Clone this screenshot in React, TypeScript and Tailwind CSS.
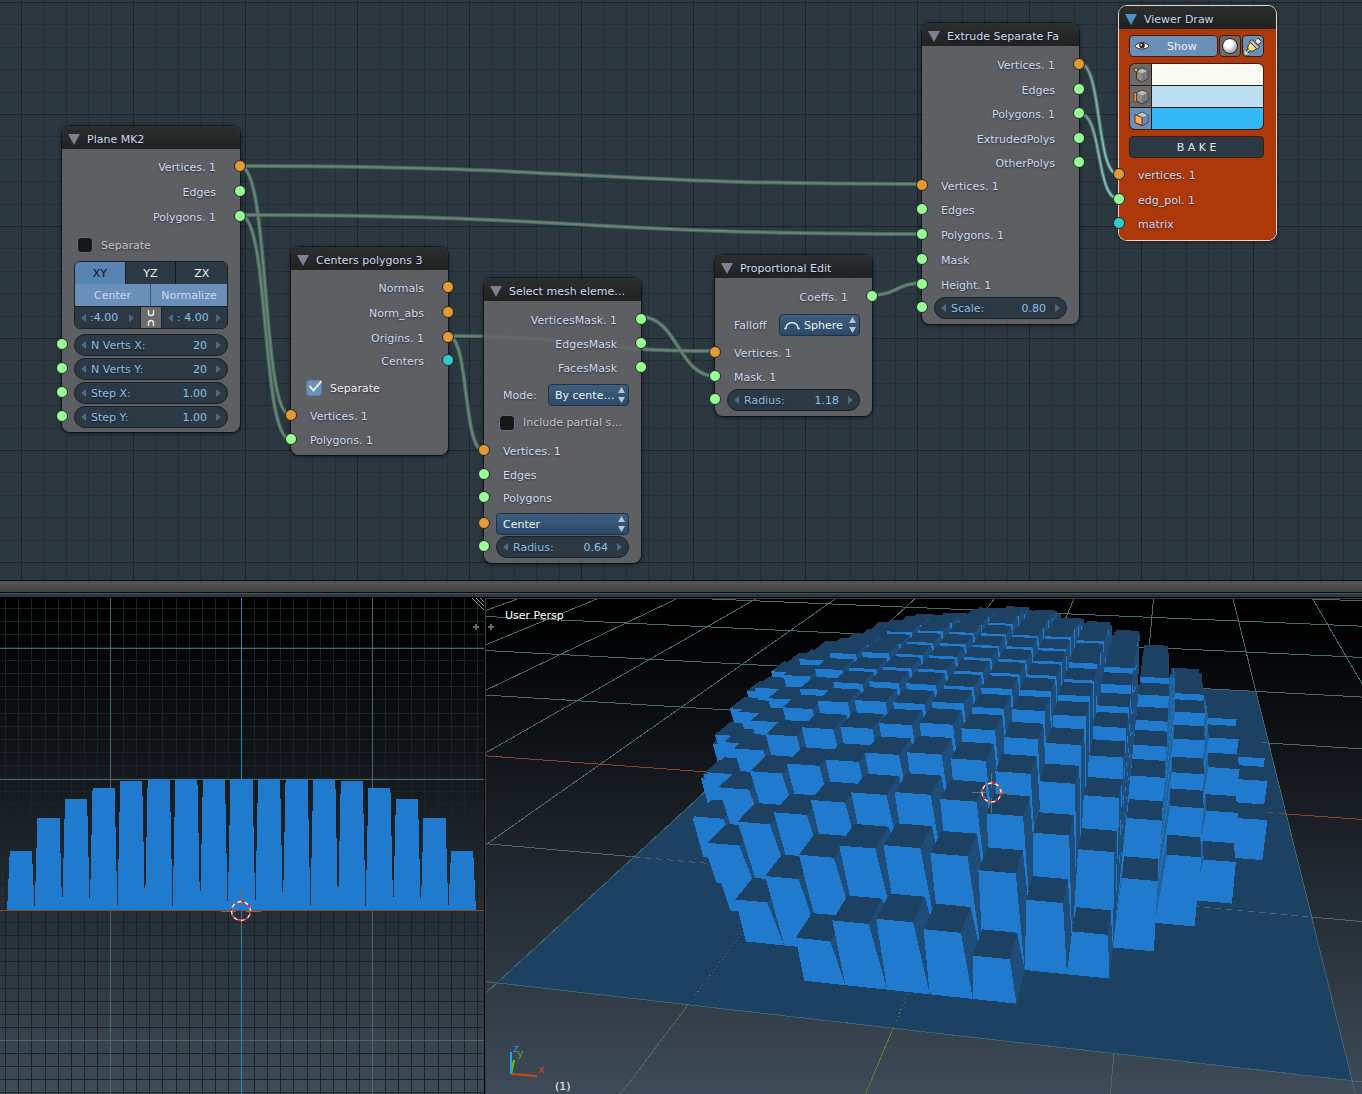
import React from "react";

type Vec = [number, number, number];

/* ---------- camera ---------- */
const P = [0.34443, 0.12091, -0.05625, 0.23077, 0.02584, -0.19383, -0.29998, -0.0184, -0.02372, 0.17641, -0.13595];
const CAM_X = 1.014;
const CELL = 4 / 19;

const wOf = ([x, y, z]: Vec) => P[8] * x + P[9] * y + P[10] * z + 1;
function project(p: Vec): [number, number] {
  const [x, y, z] = p;
  const w = wOf(p);
  return [
    415 + (400 * (P[0] * x + P[1] * y + P[2] * z + P[3])) / w,
    202 + (400 * (P[4] * x + P[5] * y + P[6] * z + P[7])) / w,
  ];
}

/* ---------- scene data ---------- */
const CORE: [number, number][] = [];
for (let i = -3; i <= 3; i++) for (let j = -3; j <= 3; j++) if (Math.hypot(i, j) * CELL <= 0.64) CORE.push([i, j]);

function blockHeight(i: number, j: number) {
  const d = (Math.min(...CORE.map(([a, b]) => Math.hypot(i - a, j - b))) * CELL) / 1.18;
  return d < 1 ? Math.sqrt(1 - d * d) : 0;
}

const pts = (a: [number, number][]) => a.map(([x, y]) => `${x.toFixed(1)},${y.toFixed(1)}`).join(" ");
const area = (a: [number, number][]) =>
  a.reduce((s, [x, y], k) => {
    const [u, v] = a[(k + 1) % a.length];
    return s + x * v - u * y;
  }, 0);

const CORNERS = [[-1, -1], [1, -1], [1, 1], [-1, 1]] as const;

function buildBlocks() {
  const out: { p: string; c: string }[] = [];
  for (let j = 9; j >= -9; j--) {
    const cols = Array.from({ length: 19 }, (_, k) => k - 9).sort((a, b) => Math.abs(b * CELL - CAM_X) - Math.abs(a * CELL - CAM_X));
    for (const i of cols) {
      const h = blockHeight(i, j);
      if (h === 0) continue;
      const cx = i * CELL, cy = j * CELL, b = CELL / 2, t = b * 0.8;
      const B = CORNERS.map(([x, y]) => project([cx + x * b, cy + y * b, 0]));
      const T = CORNERS.map(([x, y]) => project([cx + x * t, cy + y * t, h]));
      const faces: [[number, number][], string][] = [
        [[B[3], B[0], T[0], T[3]], "#1f639f"],
        [[B[1], B[2], T[2], T[1]], "#1d4d78"],
        [[B[0], B[1], T[1], T[0]], "#207bcf"],
        [T, "#1d4163"],
      ];
      faces.forEach(([f, c]) => {
        if (area(f) < 0) out.push({ p: pts(f), c });
      });
    }
  }
  return out;
}
const BLOCKS = buildBlocks();

function segment(a: Vec, b: Vec) {
  const near = 0.12, wa = wOf(a), wb = wOf(b);
  const mix = (t: number): Vec => [a[0] + (b[0] - a[0]) * t, a[1] + (b[1] - a[1]) * t, 0];
  const t = (near - wa) / (wb - wa);
  const p = project(wa < near ? mix(t) : a), q = project(wb < near ? mix(t) : b);
  return { x1: p[0], y1: p[1], x2: q[0], y2: q[1] };
}
const RANGE = Array.from({ length: 17 }, (_, k) => k - 8);

/* ---------- node parts ---------- */
const ORANGE = "bg-[#e59a33]", GREEN = "bg-[#97ff93]", TEAL = "bg-[#31cbc9]";

function Socket({ color, side }: { color: string; side: "l" | "r" }) {
  return <span className={`absolute top-1/2 z-10 size-3 -translate-y-[7px] rounded-full border border-[#20262a] ${color} ${side === "l" ? "-left-1.5" : "-right-1.5"}`} />;
}
function Out({ color, label, h = "h-[25px]" }: { color: string; label: string; h?: string }) {
  return <div className={`relative flex items-center justify-end pr-6 ${h}`}><span className="pt-0.5">{label}</span><Socket color={color} side="r" /></div>;
}
function In({ color, label, children, h = "h-6" }: { color: string; label?: string; children?: React.ReactNode; h?: string }) {
  return (
    <div className={`relative flex items-center ${children ? "px-3" : "pl-[19px]"} ${h}`}>
      <Socket color={color} side="l" />
      {label && <span className="pt-0.5">{label}</span>}
      {children}
    </div>
  );
}
function Tri({ dir }: { dir: "l" | "r" }) {
  return <svg viewBox="0 0 5 8" className="h-2 w-[5px]" fill="#536a7b"><path d={dir === "l" ? "M5 0V8L0 4Z" : "M0 0V8L5 4Z"} /></svg>;
}
function Num({ label, value, tight }: { label: string; value: string; tight?: boolean }) {
  return (
    <div className={`flex h-[22px] min-w-0 items-center border-[#1b2024] bg-[#2b3944] px-1.5 text-[#8ec0e8] ${tight ? "flex-1 border-t" : "w-full rounded-full border"}`}>
      <button aria-label="Decrease"><Tri dir="l" /></button>
      <label className={`flex min-w-0 flex-1 items-center pt-px ${tight ? "pl-1" : "px-[5px]"}`}>
        <span className="whitespace-pre">{label}</span>
        <input className={`w-full min-w-0 flex-1 bg-transparent outline-none ${tight ? "text-left" : "pr-1 text-right"}`} defaultValue={value} />
      </label>
      <button aria-label="Increase"><Tri dir="r" /></button>
    </div>
  );
}
function Pick({ value, label, w, icon }: { value: string; label: string; w: string; icon?: boolean }) {
  return (
    <span className={`relative flex h-[22px] items-center rounded-[4px] border border-[#22303c] bg-gradient-to-b from-[#3f5f80] to-[#2b4a6b] ${w}`}>
      {icon && <svg viewBox="0 0 16 10" className="ml-1 h-2.5 w-4 shrink-0" fill="none" stroke="#e8ecef" strokeWidth="1.6"><path d="M.5 9L2 8C2.500 1 13.500 1 14 8L15.500 9" /></svg>}
      <select aria-label={label} className={`h-full w-full appearance-none bg-transparent pt-px text-[#eef3f8] outline-none ${icon ? "pl-1" : "pl-1.5"}`}><option>{value}</option></select>
      <svg viewBox="0 0 7 16" className="pointer-events-none absolute right-[3px] top-0.5 h-4 w-[7px]" fill="#b9c4ce"><path d="M3.500 0L7 6H0ZM3.500 16L7 10H0Z" /></svg>
    </span>
  );
}
function Check({ label, checked, h }: { label: string; checked?: boolean; h: string }) {
  return (
    <label className={`flex items-center gap-2 pl-[15px] ${h} ${checked ? "text-[#f0f2f4]" : "text-[#c3c7c9]"}`}>
      <span className="relative flex size-4">
        <input type="checkbox" defaultChecked={checked} className="size-4 appearance-none rounded-[4px] border border-[#5b7187] bg-[#171717] checked:border-[#5d83ab] checked:bg-[#6a90b8]" />
        {checked && <svg viewBox="0 0 16 16" className="pointer-events-none absolute inset-0" fill="none" stroke="#e3e8ec" strokeWidth="2"><path d="M3.500 6L7.500 10.500L15.500 1" /></svg>}
      </span>
      <span className="pt-px">{label}</span>
    </label>
  );
}
function Node({ title, place, active, children }: { title: string; place: string; active?: boolean; children: React.ReactNode }) {
  return (
    <section className={`absolute rounded-lg shadow-[0_1px_5px_rgba(0,0,0,0.7)] ${place} ${active ? "bg-[#b23a08]/97 ring-1 ring-[#e8d9cf]" : "bg-[#646467]/90 ring-1 ring-black/40"}`}>
      <h2 className="flex h-[23px] items-center gap-[7px] whitespace-nowrap rounded-t-lg bg-gradient-to-b from-[#2b2e2f] to-[#202222] pl-1.5 pt-1">
        <svg viewBox="0 0 12 11" className="h-[11px] w-3" fill={active ? "#4f8fc8" : "#7b8190"}><path d="M0 0H12L6 11Z" /></svg>
        <span className="pt-px">{title}</span>
      </h2>
      {children}
    </section>
  );
}
function Cube({ mode }: { mode: "v" | "e" | "f" }) {
  return (
    <svg viewBox="0 0 18 18" className="size-[18px]">
      <path d="M10 2L16 5V12.500L10 16L4.500 13V5Z" fill={mode === "f" ? "#8fa3bd" : "#8d8d8d"} stroke="#333" strokeWidth="1" />
      <path d="M10 2.500L15.500 5L10 7.500L5 5Z" fill={mode === "f" ? "#b4c6dc" : "#b9b9b9"} />
      <path d="M10 7.500L15.500 5V12.300L10 15.500Z" fill={mode === "f" ? "#7389a6" : "#7a7a7a"} />
      {mode === "v" && <circle cx="4" cy="4" r="2" fill="#ffa54a" stroke="#5a2c08" />}
      {mode === "e" && <rect x="2" y="4.500" width="2.200" height="9.500" fill="#ffa54a" stroke="#5a2c08" strokeWidth=".8" />}
      {mode === "f" && <path d="M3 4.500L10 7.500V15.500L3 12.500Z" fill="#ffb060" stroke="#5a2c08" />}
    </svg>
  );
}

const LINKS: [number, number, number, number, number][] = [
  [240, 166, 922, 184, 0.5], [240, 215, 922, 234, 0.5], [240, 166, 291, 416, 0.6], [240, 215, 291, 440, 0.6],
  [448, 336, 715, 351, 0.5], [448, 336, 484, 451, 0.6], [641, 317, 715, 376, 0.5], [872, 295, 922, 283, 0.5],
];
const HOT: [number, number, number, number][] = [[1079, 63, 1119, 175], [1079, 113, 1119, 199]];
const curve = (x1: number, y1: number, x2: number, y2: number, k: number) => `M${x1} ${y1}C${x1 + (x2 - x1) * k} ${y1} ${x2 - (x2 - x1) * k} ${y2} ${x2} ${y2}`;

function NodeEditor() {
  return (
    <main className="relative h-[580px] overflow-hidden bg-[#2c3840] text-[#cbdcf3] [text-shadow:0_1px_2px_rgba(0,0,0,0.55)]">
      <svg className="absolute inset-0 size-full">
        <defs>
          <pattern id="grid" x="21" y="2" width="112" height="112" patternUnits="userSpaceOnUse">
            <path d="M22.500 0V112M45.500 0V112M67.500 0V112M90.500 0V112M0 22.500H112M0 45.500H112M0 67.500H112M0 90.500H112" stroke="#242e36" />
            <path d="M.5 0V112M0 .5H112" stroke="#1a232a" />
          </pattern>
          <linearGradient id="hot"><stop offset="0" stopColor="#77857f" /><stop offset="1" stopColor="#8ad0e0" /></linearGradient>
        </defs>
        <rect width="100%" height="100%" fill="url(#grid)" />
        <g fill="none">
          {LINKS.map((l, k) => <path key={k} d={curve(...l)} stroke="#3d6e59" strokeWidth="4" />)}
          {LINKS.map((l, k) => <path key={k} d={curve(...l)} stroke="#737d78" strokeWidth="2" />)}
          {HOT.map((l, k) => <path key={k} d={curve(...l, 0.6)} stroke="#3d6e59" strokeWidth="4" />)}
          {HOT.map((l, k) => <path key={k} d={curve(...l, 0.6)} stroke="url(#hot)" strokeWidth="2" />)}
        </g>
      </svg>

      <Node title="Plane MK2" place="left-[62px] top-[126px] w-[178px] pb-[3px]">
        <div className="pt-[5px]">
          <Out color={ORANGE} label="Vertices. 1" /><Out color={GREEN} label="Edges" /><Out color={GREEN} label="Polygons. 1" />
        </div>
        <Check label="Separate" h="h-8" />
        <div className="mx-3 overflow-hidden rounded-md border border-[#1b2024] text-center">
          <div className="grid h-[22px] grid-cols-3 divide-x divide-[#15191c] bg-[#2b3944] text-[#f0f3f5]">
            <button aria-pressed="true" className="bg-[#5685b4] pt-px text-[#0b0d10]">XY</button><button className="pt-px">YZ</button><button className="pt-px">ZX</button>
          </div>
          <div className="grid h-[22px] grid-cols-2 divide-x divide-[#3d566f] bg-[#6a8fb8] text-[#c9daf5]">
            <button className="pt-px">Center</button><button className="pt-px">Normalize</button>
          </div>
          <div className="flex">
            <Num label=":" value="4.00" tight />
            <button aria-label="Link sizes" className="flex w-[22px] items-center justify-center border-x border-t border-[#1b2024] bg-[#6b6b6b]">
              <svg viewBox="0 0 10 20" className="h-5 w-2.5" fill="none" stroke="#e9e9e9" strokeWidth="1.5"><path d="M2.500 2V5Q2.500 7.500 5 7.500T7.500 5V2M2.500 18V15Q2.500 12.500 5 12.500T7.500 15V18" /></svg>
            </button>
            <Num label=": " value="4.00" tight />
          </div>
        </div>
        <div className="pt-1">
          <In color={GREEN}><Num label="N Verts X:" value="20" /></In>
          <In color={GREEN}><Num label="N Verts Y:" value="20" /></In>
          <In color={GREEN}><Num label="Step X:" value="1.00" /></In>
          <In color={GREEN}><Num label="Step Y:" value="1.00" /></In>
        </div>
      </Node>

      <Node title="Centers polygons 3" place="left-[291px] top-[247px] w-[157px] pb-[3px]">
        <div className="pt-[5px]">
          <Out color={ORANGE} label="Normals" /><Out color={ORANGE} label="Norm_abs" /><Out color={ORANGE} label="Origins. 1" /><Out color={TEAL} label="Centers" h="h-[22px]" />
        </div>
        <Check label="Separate" checked h="h-8" />
        <In color={ORANGE} label="Vertices. 1" /><In color={GREEN} label="Polygons. 1" />
      </Node>

      <Node title="Select mesh eleme…" place="left-[484px] top-[278px] w-[157px] pb-1">
        <div className="pt-[7px]">
          <Out color={GREEN} label="VerticesMask. 1" h="h-6" /><Out color={GREEN} label="EdgesMask" h="h-6" /><Out color={GREEN} label="FacesMask" h="h-6" />
        </div>
        <div className="flex h-[30px] items-center justify-between pl-[19px] pr-3"><span className="pt-px">Mode:</span><Pick label="Mode" value="By cente…" w="w-[81px]" /></div>
        <Check label="Include partial s…" h="h-[25px]" />
        <In color={ORANGE} label="Vertices. 1" h="h-8" /><In color={GREEN} label="Edges" h="h-4" /><In color={GREEN} label="Polygons" h="h-[30px]" />
        <In color={ORANGE} h="h-[22px]"><Pick label="Element" value="Center" w="w-full" /></In>
        <In color={GREEN}><Num label="Radius:" value="0.64" /></In>
      </Node>

      <Node title="Proportional Edit" place="left-[715px] top-[255px] w-[157px] pb-[5px]">
        <div className="pt-[7px]"><Out color={GREEN} label="Coeffs. 1" h="h-6" /></div>
        <div className="flex h-8 items-center justify-between pl-[19px] pr-3"><span className="pt-px">Falloff</span><Pick label="Falloff" value="Sphere" w="w-[81px]" icon /></div>
        <In color={ORANGE} label="Vertices. 1" /><In color={GREEN} label="Mask. 1" />
        <In color={GREEN} h="h-[22px]"><Num label="Radius:" value="1.18" /></In>
      </Node>

      <Node title="Extrude Separate Fa" place="left-[922px] top-[23px] w-[157px] pb-[5px]">
        <div className="pt-1.5">
          <Out color={ORANGE} label="Vertices. 1" /><Out color={GREEN} label="Edges" /><Out color={GREEN} label="Polygons. 1" h="h-6" /><Out color={GREEN} label="ExtrudedPolys" /><Out color={GREEN} label="OtherPolys" h="h-6" />
        </div>
        <In color={ORANGE} label="Vertices. 1" h="h-[22px]" /><In color={GREEN} label="Edges" h="h-[25px]" /><In color={GREEN} label="Polygons. 1" h="h-[25px]" /><In color={GREEN} label="Mask" h="h-[25px]" /><In color={GREEN} label="Height. 1" h="h-[25px]" />
        <In color={GREEN} h="h-[22px]"><Num label="Scale:" value="0.80" /></In>
      </Node>

      <Node title="Viewer Draw" active place="left-[1119px] top-[6px] w-[157px] pb-1">
        <div className="flex flex-col gap-1.5 pl-2.5 pr-3 pt-1.5">
          <div className="flex h-[22px] gap-px">
            <button className="flex flex-1 items-center gap-[17px] rounded-[4px] border border-[#3a1d12] bg-[#6a8fb8] pl-1 text-[#eaf0f8]">
              <svg viewBox="0 0 16 12" className="h-3 w-4"><path d="M.8 6C4 1.500 12 1.500 15.200 6C12 10 4 10 .8 6Z" fill="#f3f3f3" stroke="#333" /><circle cx="8" cy="5.500" r="2.800" fill="#2a2a2a" /><circle cx="7.300" cy="4.800" r=".9" fill="#fff" /></svg>
              <span className="pt-px">Show</span>
            </button>
            <button aria-label="Shading" className="flex w-[22px] items-center justify-center rounded-[4px] border border-[#3a1d12] bg-[#6b6b6b]">
              <svg viewBox="0 0 18 18" className="size-[18px]"><defs><radialGradient id="ball" cx=".4" cy=".35"><stop offset=".5" stopColor="#fff" /><stop offset="1" stopColor="#b9b9b9" /></radialGradient></defs><circle cx="9" cy="9" r="7.500" fill="url(#ball)" stroke="#222" /></svg>
            </button>
            <button aria-label="Live update" className="flex w-[22px] items-center justify-center rounded-[4px] border border-[#3a1d12] bg-[#6a8fb8]">
              <svg viewBox="0 0 20 20" className="size-5 shrink-0">
                <path d="M12 5.500L15 2L18.500 5.500L15 9Z" fill="#dcdcdc" stroke="#333" />
                <path d="M9 3.500L16.500 11L14 13.500L6.500 6Z" fill="#c4c4c4" stroke="#333" />
                <path d="M7.500 6.500L13.500 12.500Q9 17 5.500 14.500Q3 11 7.500 6.500Z" fill="#f1e384" stroke="#333" />
                <path d="M13.500 3.500L16.500 6.500" stroke="#fff" strokeWidth="1.300" />
                <path d="M6.500 13.500L2.500 17.500M2 13.500V18H6.500" stroke="#2f3a2a" strokeWidth="3" fill="none" />
                <path d="M6.500 13.500L2.500 17.500M2 13.500V18H6.500" stroke="#d6e2c0" strokeWidth="1.500" fill="none" />
              </svg>
            </button>
          </div>
          <div className="grid grid-cols-[21px_1fr] gap-px overflow-hidden rounded-md border border-[#3a1d12] bg-[#2a1a14]">
            <button aria-label="Show vertices" className="flex h-[21px] items-center justify-center bg-[#6b6b6b]"><Cube mode="v" /></button><button aria-label="Vertex color" className="bg-[#f9faf4]" />
            <button aria-label="Show edges" className="flex h-[21px] items-center justify-center bg-[#6b6b6b]"><Cube mode="e" /></button><button aria-label="Edge color" className="bg-[#bce0f2]" />
            <button aria-label="Show faces" className="flex h-[21px] items-center justify-center bg-[#6a8fb8]"><Cube mode="f" /></button><button aria-label="Face color" className="bg-[#32b9f5]" />
          </div>
          <button className="h-[22px] rounded-[4px] border border-[#3a1d12] bg-[#2b3944] pt-px text-[#e3e8ec]">B A K E</button>
        </div>
        <div className="pt-1">
          <In color={ORANGE} label="vertices. 1" h="h-[25px]" /><In color={GREEN} label="edg_pol. 1" h="h-[25px]" /><In color={TEAL} label="matrix" />
        </div>
      </Node>
    </main>
  );
}

function Cursor({ x, y }: { x: number; y: number }) {
  return (
    <g transform={`translate(${x} ${y})`} fill="none">
      <path d="M-20 0H-5M5 0H20M0 -20V-5M0 5V20" stroke="#7b6a60" shapeRendering="crispEdges" />
      <circle r="9.500" stroke="#fff" strokeWidth="1.300" />
      <circle r="9.500" stroke="#f00000" strokeWidth="1.300" strokeDasharray="3.730 3.730" />
    </g>
  );
}
function Sky({ id }: { id: string }) {
  return (
    <>
      <linearGradient id={id} x1="0" y1="0" x2="0" y2="1"><stop offset="0" stopColor="#000" /><stop offset=".1" stopColor="#030405" /><stop offset="1" stopColor="#3e4b58" /></linearGradient>
      <rect width="2000" height="496" fill={`url(#${id})`} />
    </>
  );
}

function FrontView() {
  const U = 131, y0 = 312;
  return (
    <svg viewBox="0 0 484 496" preserveAspectRatio="xMinYMin slice" className="size-full">
      <Sky id="skyA" />
      <g shapeRendering="crispEdges" fill="none">
        {Array.from({ length: 41 }, (_, k) => <path key={k} d={`M${Math.round(241 + (k - 20) * 13.1) + 0.5} 0V496`} stroke="#182426" />)}
        {Array.from({ length: 41 }, (_, k) => <path key={k} d={`M0 ${Math.round(311 + (k - 24) * 13.1) + 0.5}H484`} stroke="#182426" />)}
        <path d="M110.500 0V496M372.500 0V496M0 50.500H484M0 181.500H484M0 442.500H484" stroke="#456a68" />
        <path d="M241.500 0V496" stroke="#2e86a8" />
      </g>
      {Array.from({ length: 17 }, (_, k) => {
        const i = k - 8, h = blockHeight(i, 0) * U, cx = 241.5 + i * CELL * U, b = (CELL * U) / 2;
        return <polygon key={k} fill="#207bcf" shapeRendering="crispEdges" points={pts([[cx - b, y0], [cx - b * 0.8, y0 - h], [cx + b * 0.8, y0 - h], [cx + b, y0]])} />;
      })}
      <path d="M0 312.500H484" stroke="#8a4a2c" shapeRendering="crispEdges" />
      <Cursor x={241} y={313} />
      <path d="M472 0L484 12M476 0L484 8M480 0L484 4" stroke="#9a9a9a" />
      <path d="M473 29H479M476 26V32" stroke="#666" strokeWidth="2" />
    </svg>
  );
}

function PerspView() {
  const plane = pts(CORNERS.map(([x, y]) => project([x * 2, y * 2, 0])));
  return (
    <svg viewBox="0 0 877 496" preserveAspectRatio="xMinYMin slice" className="size-full">
      <Sky id="skyB" />
      <g shapeRendering="crispEdges" fill="none">
        {RANGE.map((k) => <line key={k} {...segment([-8, k, 0], [8, k, 0])} stroke={k === 0 ? "#8a4526" : "#4a6b6c"} />)}
        {RANGE.map((k) => <line key={k} {...segment([k, -8, 0], [k, 8, 0])} stroke={k === 0 ? "#4f8a20" : "#4a6b6c"} />)}
        <polygon points={plane} fill="#1d4163" stroke="#3c6570" />
        {[-1, 1].map((k) => <line key={k} {...segment([-2, k, 0], [2, k, 0])} stroke="#4a6b6c" strokeDasharray="6 5" />)}
        {[-1, 0].map((k) => <line key={k} {...segment([k, -2, 0], [k, -1, 0])} stroke={k === 0 ? "#4f8a20" : "#4a6b6c"} strokeDasharray="1 3" />)}
        <line {...segment([1.8, 0, 0], [2, 0, 0])} stroke="#8a4526" strokeDasharray="7 5" />
        {BLOCKS.map((b, k) => <polygon key={k} points={b.p} fill={b.c} />)}
        <path d="M.5 496V.5H877" stroke="#3a3d3f" />
      </g>
      <Cursor x={506.5} y={194.5} />
      <path d="M3 29H9M6 26V32" stroke="#666" strokeWidth="2" />
      <g strokeWidth="2" fill="none">
        <path d="M26 476L52 478" stroke="#d0480f" /><path d="M26 476L29 462" stroke="#74c010" /><path d="M26 476V454" stroke="#12aee8" />
      </g>
      <g fontFamily="DejaVu Sans" fontSize="11">
        <text x="20" y="21" fill="#fff">User Persp</text>
        <text x="70" y="492" fill="#fff">(1)</text>
        <text x="28" y="454" fill="#1c9dd8">z</text><text x="32" y="459" fill="#5aa51c">y</text><text x="53" y="475" fill="#c2481c">x</text>
      </g>
    </svg>
  );
}

export default function App() {
  return (
    <div className="flex min-h-screen flex-col bg-black font-['DejaVu_Sans',sans-serif] text-[11px] leading-[14px]">
      <NodeEditor />
      <div className="h-[13px] border-y border-[#0c0d0e] bg-gradient-to-b from-[#575757] to-[#414141]" />
      <div className="h-1 border-t border-[#49555c] bg-[#2c3840]" />
      <div className="mt-px grid h-[496px] grid-cols-[484px_1fr] gap-px">
        <FrontView />
        <PerspView />
      </div>
    </div>
  );
}
